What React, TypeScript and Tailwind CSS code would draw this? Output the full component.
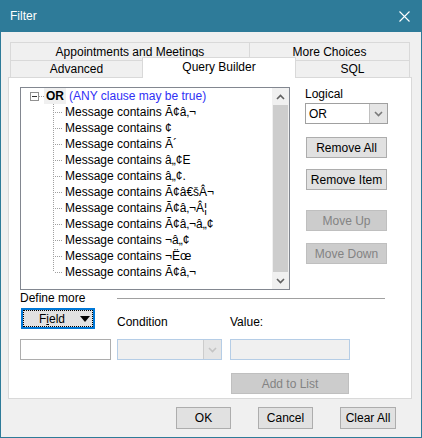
import React from 'react';

const items = [
    'Ã¢â‚¬',
    '¢',
    'Ã´',
    'â„¢E',
    'â„¢.',
    'Ã¢â€šÂ¬',
    'Ã¢â‚¬Â¦',
    'Ã¢â‚¬â„¢',
    '¬â„¢',
    '¬Ëœ',
    'Ã¢â‚¬',
];

function Tab({ className, children }: { className: string, children: React.ReactNode }) {
    return (
        <div className={`flex items-center justify-center border-x border-t border-[#d9d9d9] bg-[#f0f0f0] ${className}`}>
            {children}
        </div>
    );
}

function Button({ label, disabled, className }: { label: string, disabled?: boolean, className: string }) {
    return (
        <div
            className={`flex items-center justify-center border ${disabled
                ? 'bg-[#cccccc] border-[#bfbfbf] text-[#838383]'
                : 'bg-[#e1e1e1] border-[#adadad] text-black'
                } ${className}`}
        >
            {label}
        </div>
    );
}

function Chevron({ up, color = '#606060' }: { up?: boolean, color?: string }) {
    return (
        <svg width="9" height="6" viewBox="0 0 9 6">
            <path
                d={up ? 'M1 5L4.5 1.5L8 5' : 'M1 1L4.5 4.5L8 1'}
                fill="none"
                stroke={color}
                strokeWidth="1.6"
            />
        </svg>
    );
}

function TreeLine({ last }: { last: boolean }) {
    return (
        <svg width="12" height="16" viewBox="0 0 12 16" className="shrink-0">
            <line x1="0.5" y1="0" x2="0.5" y2={last ? 8 : 16} stroke="#a0a0a0" strokeDasharray="1 1" />
            <line x1="2" y1="8.5" x2="10" y2="8.5" stroke="#a0a0a0" strokeDasharray="1 1" />
        </svg>
    );
}

export default function App() {
    return (
        <div className="w-[422px] h-[438px] flex flex-col bg-[#f0f0f0] border-x border-b border-[#2e7b99] text-[12px] leading-[16px] text-black font-['Liberation_Sans',Arial,sans-serif] select-none">
            {/* title bar */}
            <div className="h-[32px] shrink-0 -mx-px bg-[#2e7b99] flex items-center justify-between pl-[10px] pr-[12px] text-white">
                <span>Filter</span>
                <svg width="11" height="11" viewBox="0 0 11 11">
                    <path d="M0.5 0.5L10.5 10.5M10.5 0.5L0.5 10.5" stroke="white" strokeWidth="1.1" />
                </svg>
            </div>

            <div className="ml-[7px] mt-[10px] w-[404px]">
                {/* tabs */}
                <div className="pl-[2px]">
                    <div className="flex h-[18px]">
                        <Tab className="w-[240px]">Appointments and Meetings</Tab>
                        <Tab className="w-[161px] -ml-px">More Choices</Tab>
                    </div>
                    <div className="flex h-[17px] items-start">
                        <Tab className="w-[133px] h-[17px]">Advanced</Tab>
                        <div className="relative z-10 -ml-px -mt-[3px] -mb-px h-[21px] w-[154px] bg-white border-x border-t border-[#d9d9d9] flex justify-center pt-[1px]">
                            Query Builder
                        </div>
                        <Tab className="w-[115px] h-[17px] -ml-px">SQL</Tab>
                    </div>
                </div>

                {/* panel */}
                <div className="h-[322px] bg-white border border-[#d9d9d9] pt-[9px] pl-[11px]">
                    <div className="flex">
                        {/* tree list */}
                        <div className="w-[270px] h-[203px] border border-[#828790] flex bg-white">
                            <div className="flex-1">
                                <div className="h-[16px] flex items-center pl-[9px]">
                                    <div className="w-[9px] h-[9px] border border-[#919191] flex items-center justify-center">
                                        <div className="w-[5px] h-px bg-[#333333]" />
                                    </div>
                                    <svg width="5" height="16" viewBox="0 0 5 16">
                                        <line x1="0" y1="8.5" x2="5" y2="8.5" stroke="#a0a0a0" strokeDasharray="1 1" />
                                    </svg>
                                    <span className="font-bold bg-[#f0f0f0] px-[2px]">OR</span>
                                    <span className="ml-[3px] text-[#2f2ff5]">(ANY clause may be true)</span>
                                </div>
                                {items.map((t, i) => (
                                    <div key={i} className="h-[16px] flex items-center pl-[32px]">
                                        <TreeLine last={i === items.length - 1} />
                                        <span className="whitespace-nowrap">Message contains {t}</span>
                                    </div>
                                ))}
                            </div>
                            <div className="w-[17px] flex flex-col bg-[#f0f0f0]">
                                <div className="h-[17px] flex items-center justify-center">
                                    <Chevron up />
                                </div>
                                <div className="flex-1 bg-[#cdcdcd] mx-px" />
                                <div className="h-[17px] flex items-center justify-center">
                                    <Chevron />
                                </div>
                            </div>
                        </div>

                        {/* right column */}
                        <div className="ml-[15px] -mt-px flex flex-col">
                            <div className="h-[16px]">Logical</div>
                            <div className="mt-px w-[83px] h-[21px] border border-[#a0a0a0] bg-white flex items-center">
                                <span className="pl-[3px] flex-1">OR</span>
                                <div className="w-[18px] h-[19px] bg-[#e5e5e5] border-l border-[#c0c0c0] flex items-center justify-center">
                                    <Chevron color="#7a7a7a" />
                                </div>
                            </div>
                            <Button label="Remove All" className="mt-[13px] ml-px w-[81px] h-[21px]" />
                            <Button label="Remove Item" className="mt-[11px] ml-px w-[81px] h-[21px]" />
                            <Button label="Move Up" disabled className="mt-[20px] ml-px w-[81px] h-[21px]" />
                            <Button label="Move Down" disabled className="mt-[12px] ml-px w-[81px] h-[21px]" />
                        </div>
                    </div>

                    {/* define more */}
                    <div className="flex h-[16px]">
                        <div className="w-[97px]">Define more</div>
                        <div className="mt-[8px] w-[268px] h-px bg-[#a0a0a0]" />
                    </div>

                    <div className="mt-[2px] flex items-start">
                        <div className="ml-px w-[74px] h-[21px] border-2 border-[#0078d7] bg-[#e1e1e1]">
                            <div className="h-full border border-dotted border-black flex items-center">
                                <span className="ml-[15px]">F<span className="underline">i</span>eld</span>
                                <svg width="10" height="6" viewBox="0 0 10 6" className="ml-[15px]">
                                    <path d="M0 0H10L5 6Z" fill="black" />
                                </svg>
                            </div>
                        </div>
                        <div className="mt-[6px] ml-[22px] w-[113px]">Condition</div>
                        <div className="mt-[6px]">Value:</div>
                    </div>

                    <div className="mt-[9px] flex">
                        <div className="w-[91px] h-[21px] border border-[#adadad] bg-white" />
                        <div className="ml-[6px] w-[105px] h-[21px] border border-[#b5cde6] bg-[#f0f0f0] flex justify-end">
                            <div className="w-[18px] h-full bg-[#e5e5e5] border-l border-[#cccccc] flex items-center justify-center">
                                <Chevron color="#c4c4c4" />
                            </div>
                        </div>
                        <div className="ml-[8px] w-[120px] h-[21px] border border-[#b5cde6] bg-[#f0f0f0]" />
                    </div>

                    <Button label="Add to List" disabled className="mt-[13px] ml-[211px] w-[118px] h-[21px]" />
                </div>
            </div>

            {/* dialog buttons */}
            <div className="mt-[8px] flex justify-end gap-[27px] pr-[25px]">
                <Button label="OK" className="w-[55px] h-[22px]" />
                <Button label="Cancel" className="w-[55px] h-[22px]" />
                <Button label="Clear All" className="w-[56px] h-[22px]" />
            </div>
        </div>
    );
}
